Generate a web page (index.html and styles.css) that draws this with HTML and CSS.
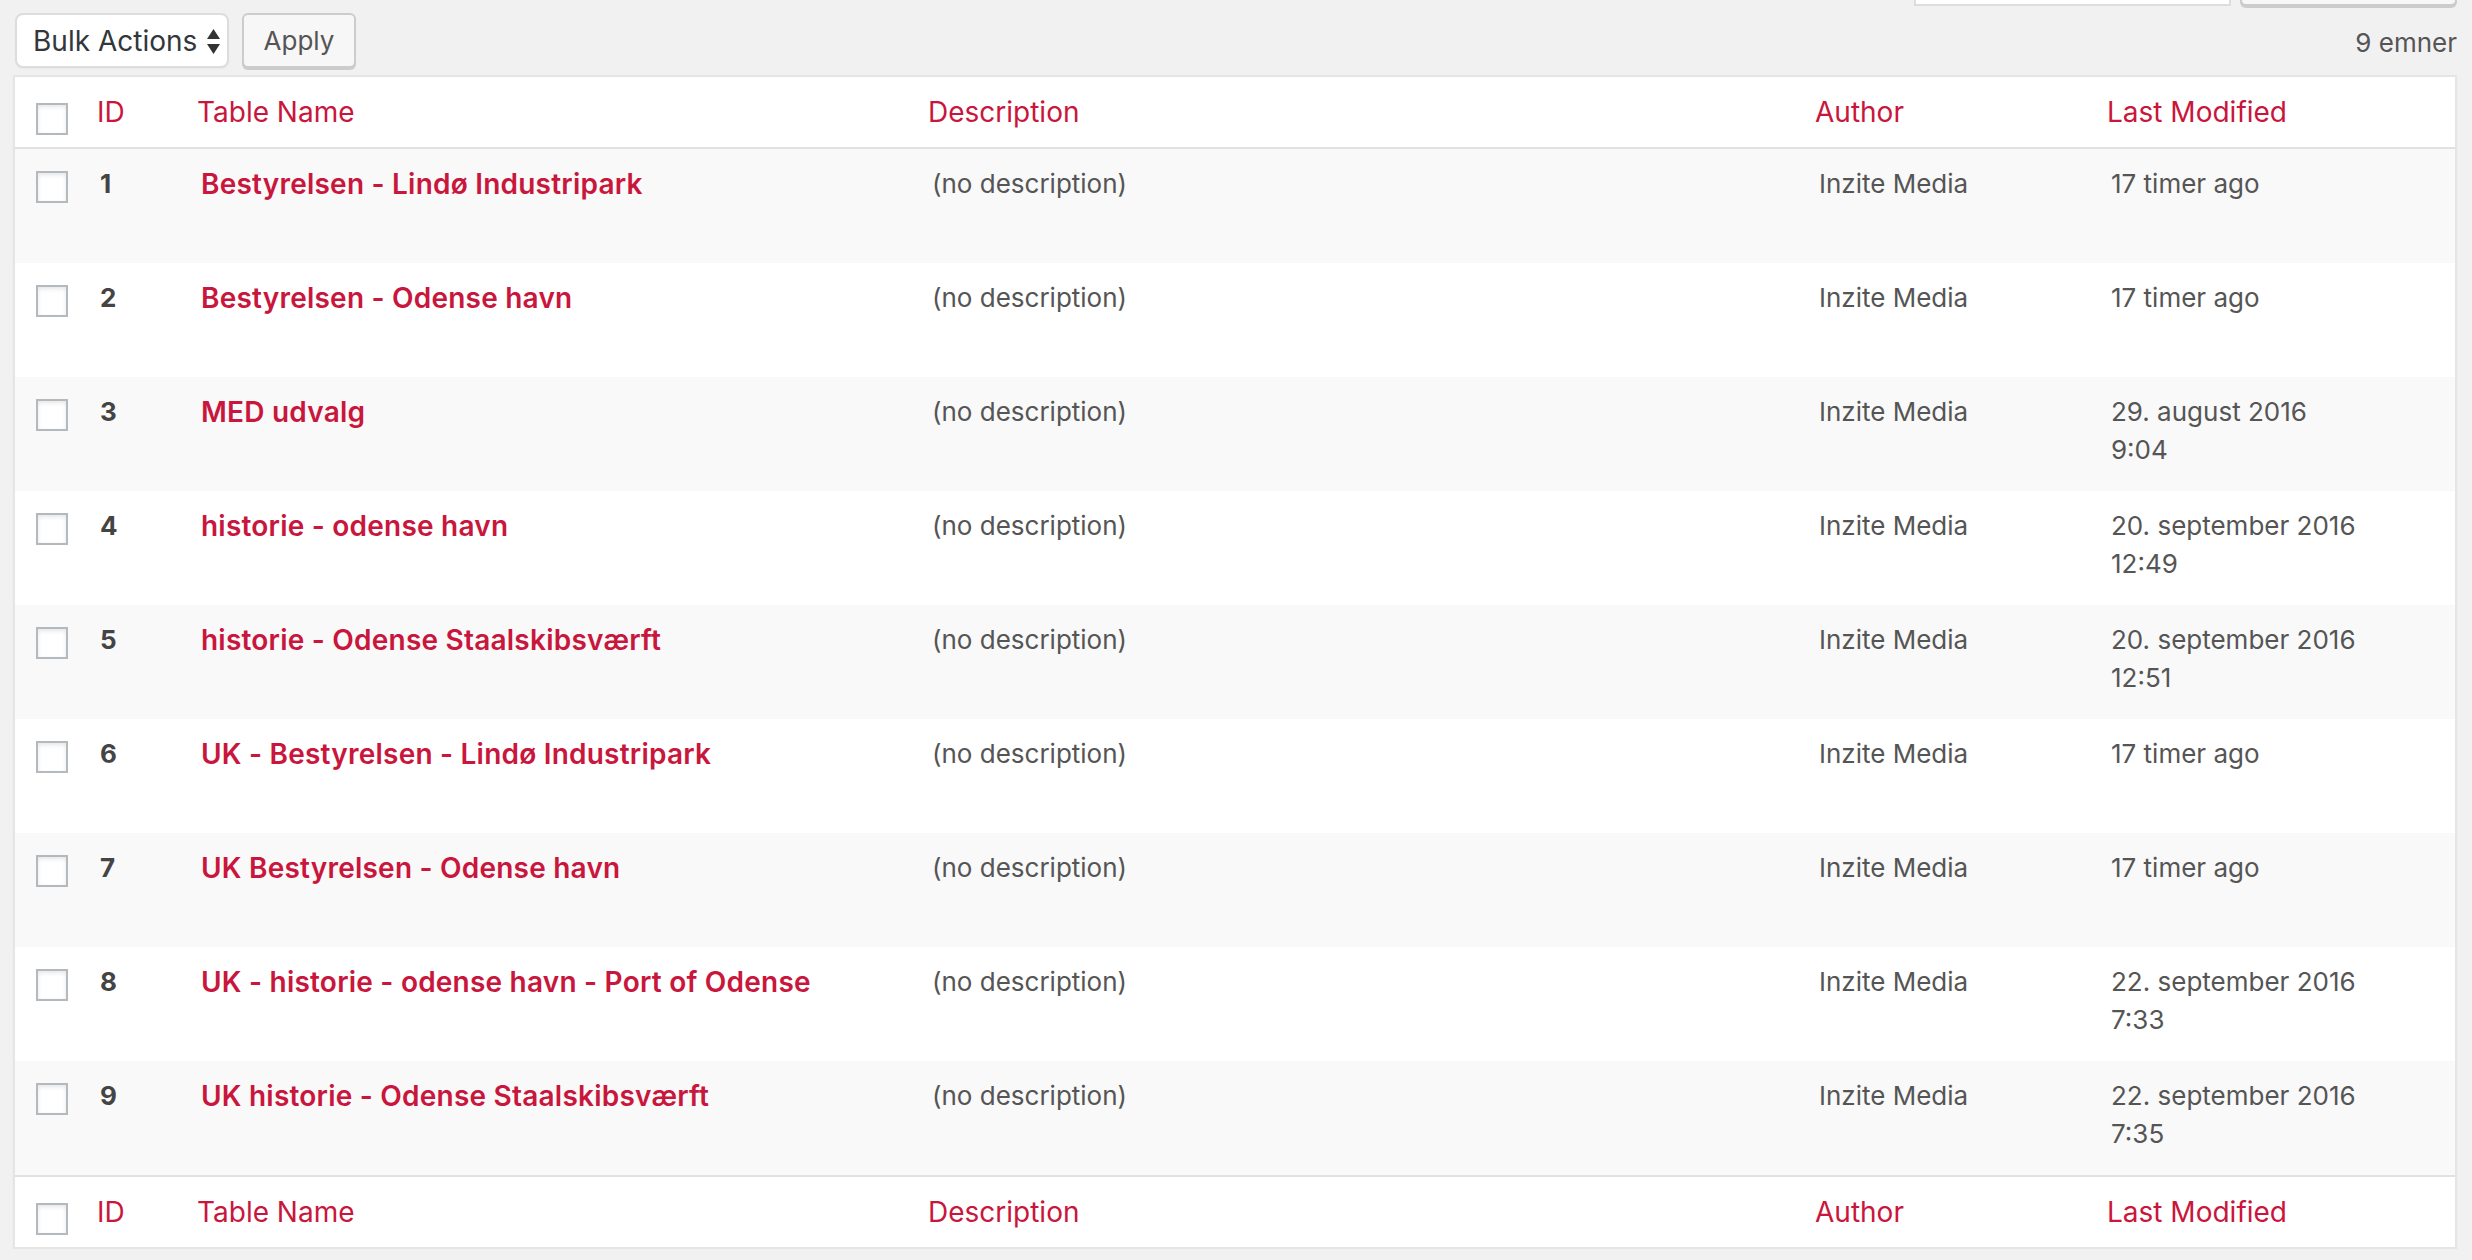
FILE: index.html
```html
<!DOCTYPE html>
<html lang="da">
<head>
<meta charset="utf-8">
<title>Tables</title>
<link rel="stylesheet" href="styles.css">
</head>
<body>
<div class="page">
  <div class="search-box">
    <span class="search-input"></span>
    <span class="search-btn"></span>
  </div>
  <div class="tablenav">
    <div class="bulk">
      <div class="select">
        <span>Bulk Actions</span>
        <svg class="arrows" width="13" height="25" viewBox="0 0 13 25"><path d="M6.5 0 L13 10 L0 10 Z M0 15 L13 15 L6.5 25 Z" fill="#333"/></svg>
      </div>
      <button class="apply">Apply</button>
    </div>
    <div class="count">9 emner</div>
  </div>
  <table class="list">
    <colgroup>
      <col class="c-check"><col class="c-id"><col class="c-name"><col class="c-desc"><col class="c-author"><col class="c-mod">
    </colgroup>
    <thead>
      <tr>
        <th class="check"><input type="checkbox"></th>
        <th>ID</th><th>Table Name</th><th>Description</th><th>Author</th><th>Last Modified</th>
      </tr>
    </thead>
    <tbody>
      <tr><td class="check"><input type="checkbox"></td><td class="id">1</td><td class="title"><a href="#">Bestyrelsen - Lindø Industripark</a></td><td>(no description)</td><td>Inzite Media</td><td>17 timer ago</td></tr>
      <tr><td class="check"><input type="checkbox"></td><td class="id">2</td><td class="title"><a href="#">Bestyrelsen - Odense havn</a></td><td>(no description)</td><td>Inzite Media</td><td>17 timer ago</td></tr>
      <tr><td class="check"><input type="checkbox"></td><td class="id">3</td><td class="title"><a href="#">MED udvalg</a></td><td>(no description)</td><td>Inzite Media</td><td>29. august 2016<br>9:04</td></tr>
      <tr><td class="check"><input type="checkbox"></td><td class="id">4</td><td class="title"><a href="#">historie - odense havn</a></td><td>(no description)</td><td>Inzite Media</td><td>20. september 2016<br>12:49</td></tr>
      <tr><td class="check"><input type="checkbox"></td><td class="id">5</td><td class="title"><a href="#">historie - Odense Staalskibsværft</a></td><td>(no description)</td><td>Inzite Media</td><td>20. september 2016<br>12:51</td></tr>
      <tr><td class="check"><input type="checkbox"></td><td class="id">6</td><td class="title"><a href="#">UK - Bestyrelsen - Lindø Industripark</a></td><td>(no description)</td><td>Inzite Media</td><td>17 timer ago</td></tr>
      <tr><td class="check"><input type="checkbox"></td><td class="id">7</td><td class="title"><a href="#">UK Bestyrelsen - Odense havn</a></td><td>(no description)</td><td>Inzite Media</td><td>17 timer ago</td></tr>
      <tr><td class="check"><input type="checkbox"></td><td class="id">8</td><td class="title"><a href="#">UK - historie - odense havn - Port of Odense</a></td><td>(no description)</td><td>Inzite Media</td><td>22. september 2016<br>7:33</td></tr>
      <tr><td class="check"><input type="checkbox"></td><td class="id">9</td><td class="title"><a href="#">UK historie - Odense Staalskibsværft</a></td><td>(no description)</td><td>Inzite Media</td><td>22. september 2016<br>7:35</td></tr>
    </tbody>
    <tfoot>
      <tr>
        <th class="check"><input type="checkbox"></th>
        <th>ID</th><th>Table Name</th><th>Description</th><th>Author</th><th>Last Modified</th>
      </tr>
    </tfoot>
  </table>
</div>
</body>
</html>
```
FILE: styles.css
```css
* { box-sizing: border-box; }

body {
  margin: 0;
  background: #f1f1f1;
  font-family: Inter, "Liberation Sans", sans-serif;
  color: #555;
}

.page {
  padding: 0 15px 0 13px;
}

.search-box {
  height: 6px;
  display: flex;
  justify-content: flex-end;
  align-items: flex-end;
  gap: 9px;
}

.search-input {
  flex: none;
  width: 317px;
  height: 56px;
  background: #fff;
  border: 2px solid #ddd;
}

.search-btn {
  flex: none;
  width: 217px;
  height: 56px;
  background: #f7f7f7;
  border: 2px solid #ccc;
  border-radius: 6px;
  box-shadow: 0 2px 0 #ccc;
}

.tablenav {
  display: flex;
  justify-content: space-between;
  align-items: flex-start;
  height: 55px;
  margin: 7px 0;
}

.bulk {
  display: flex;
  gap: 13px;
  margin-left: 2px;
}

.select {
  width: 214px;
  height: 55px;
  display: flex;
  align-items: center;
  padding: 0 7px 0 16px;
  background: #fff;
  border: 2px solid #ddd;
  border-radius: 8px;
  box-shadow: 0 1px 2px rgba(0, 0, 0, 0.04);
  font-size: 28px;
  color: #32373c;
}

.select .arrows {
  margin-left: auto;
  margin-top: 1px;
}

.apply {
  width: 114px;
  height: 55px;
  padding: 0;
  background: #f7f7f7;
  border: 2px solid #ccc;
  border-radius: 6px;
  box-shadow: 0 2px 0 #ccc;
  font-family: Inter, "Liberation Sans", sans-serif;
  font-size: 26px;
  color: #555;
}

.count {
  margin-top: 11px;
  font-size: 26px;
  line-height: 38px;
  color: #555;
}

.list {
  width: 100%;
  table-layout: fixed;
  border-collapse: separate;
  border-spacing: 0;
  background: #fff;
  border: 2px solid #e5e5e5;
  box-shadow: 0 2px 2px rgba(0, 0, 0, 0.04);
}

.c-check { width: 66px; }
.c-id { width: 100px; }
.c-name { width: 731px; }
.c-desc { width: 887px; }
.c-author { width: 292px; }
.c-mod { width: 364px; }

.list th {
  padding: 16px;
  text-align: left;
  vertical-align: top;
  font-weight: 400;
  font-size: 28px;
  line-height: 38px;
  color: #c9163c;
}

.list thead th { border-bottom: 2px solid #e1e1e1; }
.list tfoot th { border-top: 2px solid #e1e1e1; }

.list th.check { padding: 26px 0 0 21px; }

.list tbody tr { height: 114px; }
.list tbody tr:nth-child(odd) { background: #f9f9f9; }

.list td {
  padding: 16px 20px;
  vertical-align: top;
  font-size: 26px;
  line-height: 38px;
  color: #555;
}

.list td.check { padding: 22px 0 0 21px; }

.list td.id {
  padding-left: 19px;
  font-weight: 700;
  color: #444;
}

.list td.title { font-size: 28px; }

.list td.title a {
  font-weight: 600;
  letter-spacing: 0.22px;
  color: #c9163c;
  text-decoration: none;
}

input[type="checkbox"] {
  -webkit-appearance: none;
  appearance: none;
  display: block;
  width: 32px;
  height: 32px;
  margin: 0;
  background: #fff;
  border: 2px solid #b4b9be;
  box-shadow: inset 0 2px 4px rgba(0, 0, 0, 0.1);
}
```
